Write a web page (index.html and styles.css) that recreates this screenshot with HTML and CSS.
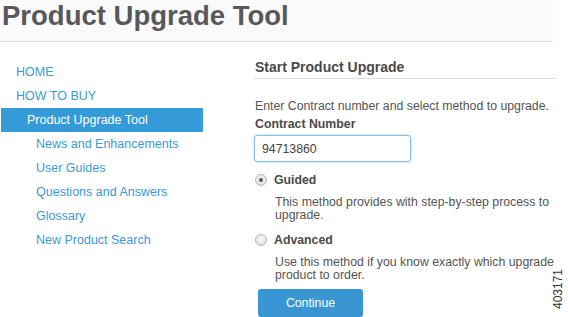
FILE: index.html
```html
<!DOCTYPE html>
<html>

<head>
    <meta charset="UTF-8" />
    <title>
        Product Upgrade Tool
    </title>
    <link rel="stylesheet" href="styles.css">
</head>

<body>
    <div class="header">
        <h1 class="title">Product Upgrade Tool</h1>
    </div>

    <div class="main">
        <ul class="sideNav">
            <li class="navItem">HOME</li>
            <li class="navItem">HOW TO BUY</li>
            <li class="navItem active">Product Upgrade Tool</li>
            <li class="navItem sub">News and Enhancements</li>
            <li class="navItem sub">User Guides</li>
            <li class="navItem sub">Questions and Answers</li>
            <li class="navItem sub">Glossary</li>
            <li class="navItem sub">New Product Search</li>
        </ul>

        <div class="content">
            <h2 class="sectionTitle">Start Product Upgrade</h2>
            <p class="intro">Enter Contract number and select method to upgrade.</p>
            <label class="fieldLabel" for="contract">Contract Number</label>
            <input class="textField" id="contract" type="text" value="94713860">

            <div class="option">
                <div class="optionHead">
                    <span class="radio checked"></span>
                    <span class="optionName">Guided</span>
                </div>
                <div class="optionText">This method provides with step-by-step process to upgrade.</div>
            </div>

            <div class="option second">
                <div class="optionHead">
                    <span class="radio"></span>
                    <span class="optionName">Advanced</span>
                </div>
                <div class="optionText">Use this method if you know exactly which upgrade product to order.</div>
            </div>

            <div class="button">Continue</div>
        </div>
    </div>

    <div class="figNumber">403171</div>
</body>

</html>
```

FILE: styles.css
```css
body {
    margin: 0;
    font-family: "Liberation Sans", Arial, sans-serif;
    background-color: white;
    width: 568px;
    height: 317px;
    overflow: hidden;
    position: relative;
}

.header {
    width: 553px;
    height: 41px;
    background-color: #fafafa;
    border-bottom: 1px solid #dcdcdc;
}

.title {
    margin: 0;
    padding-left: 2px;
    font-size: 27.5px;
    line-height: 31px;
    font-weight: bold;
    color: #58585a;
}

.main {
    display: flex;
}

.sideNav {
    list-style: none;
    margin: 18px 0 0 1px;
    padding: 0;
    width: 202px;
}

.navItem {
    height: 24px;
    line-height: 24px;
    font-size: 12.5px;
    color: #3b9ad6;
    padding-left: 15px;
}

.navItem.active {
    background-color: #349ad8;
    color: white;
    padding-left: 26px;
}

.navItem.sub {
    padding-left: 35px;
}

.content {
    margin-left: 51px;
    margin-top: 16px;
    width: 302px;
}

.sectionTitle {
    margin: 0;
    padding-left: 1px;
    font-size: 14px;
    line-height: 18px;
    padding-bottom: 2px;
    color: #4a4a4a;
    border-bottom: 1px solid #dcdcdc;
}

.intro {
    margin: 19px 0 0 1px;
    font-size: 12.3px;
    line-height: 16px;
    color: #555555;
}

.fieldLabel {
    display: block;
    margin-left: 1px;
    margin-top: 3px;
    font-size: 12.3px;
    line-height: 14px;
    font-weight: bold;
    color: #4a4a4a;
}

.textField {
    display: block;
    margin-top: 4px;
    box-sizing: border-box;
    width: 157px;
    height: 27px;
    padding: 0 0 0 7px;
    border: 1px solid #88bde6;
    border-radius: 3px;
    box-shadow: 0 0 3px #b8daf3;
    font-family: "Liberation Sans", Arial, sans-serif;
    font-size: 12.3px;
    color: #444444;
}

.option {
    margin-top: 11px;
}

.optionHead {
    display: flex;
    align-items: center;
    height: 14px;
}

.radio {
    box-sizing: border-box;
    width: 12px;
    height: 12px;
    margin-left: 1px;
    border-radius: 50%;
    border: 1px solid #b9b9b9;
    background: radial-gradient(circle at 50% 40%, #fbfbfb, #d6d6d6);
    position: relative;
}

.radio.checked::after {
    content: "";
    position: absolute;
    left: 3px;
    top: 3px;
    width: 4px;
    height: 4px;
    border-radius: 50%;
    background-color: #555555;
}

.optionName {
    margin-left: 7px;
    font-size: 12.3px;
    font-weight: bold;
    color: #4a4a4a;
}

.optionText {
    margin: 9px 0 0 21px;
    font-size: 12.3px;
    line-height: 13px;
    color: #555555;
}

.button {
    margin: 7px 0 0 4px;
    width: 105px;
    height: 28px;
    line-height: 28px;
    border-radius: 3px;
    background-color: #3a96d3;
    color: white;
    font-size: 12.3px;
    text-align: center;
}

.figNumber {
    position: absolute;
    left: 538px;
    top: 282px;
    transform: rotate(-90deg);
    font-size: 12px;
    color: #333333;
}
```
